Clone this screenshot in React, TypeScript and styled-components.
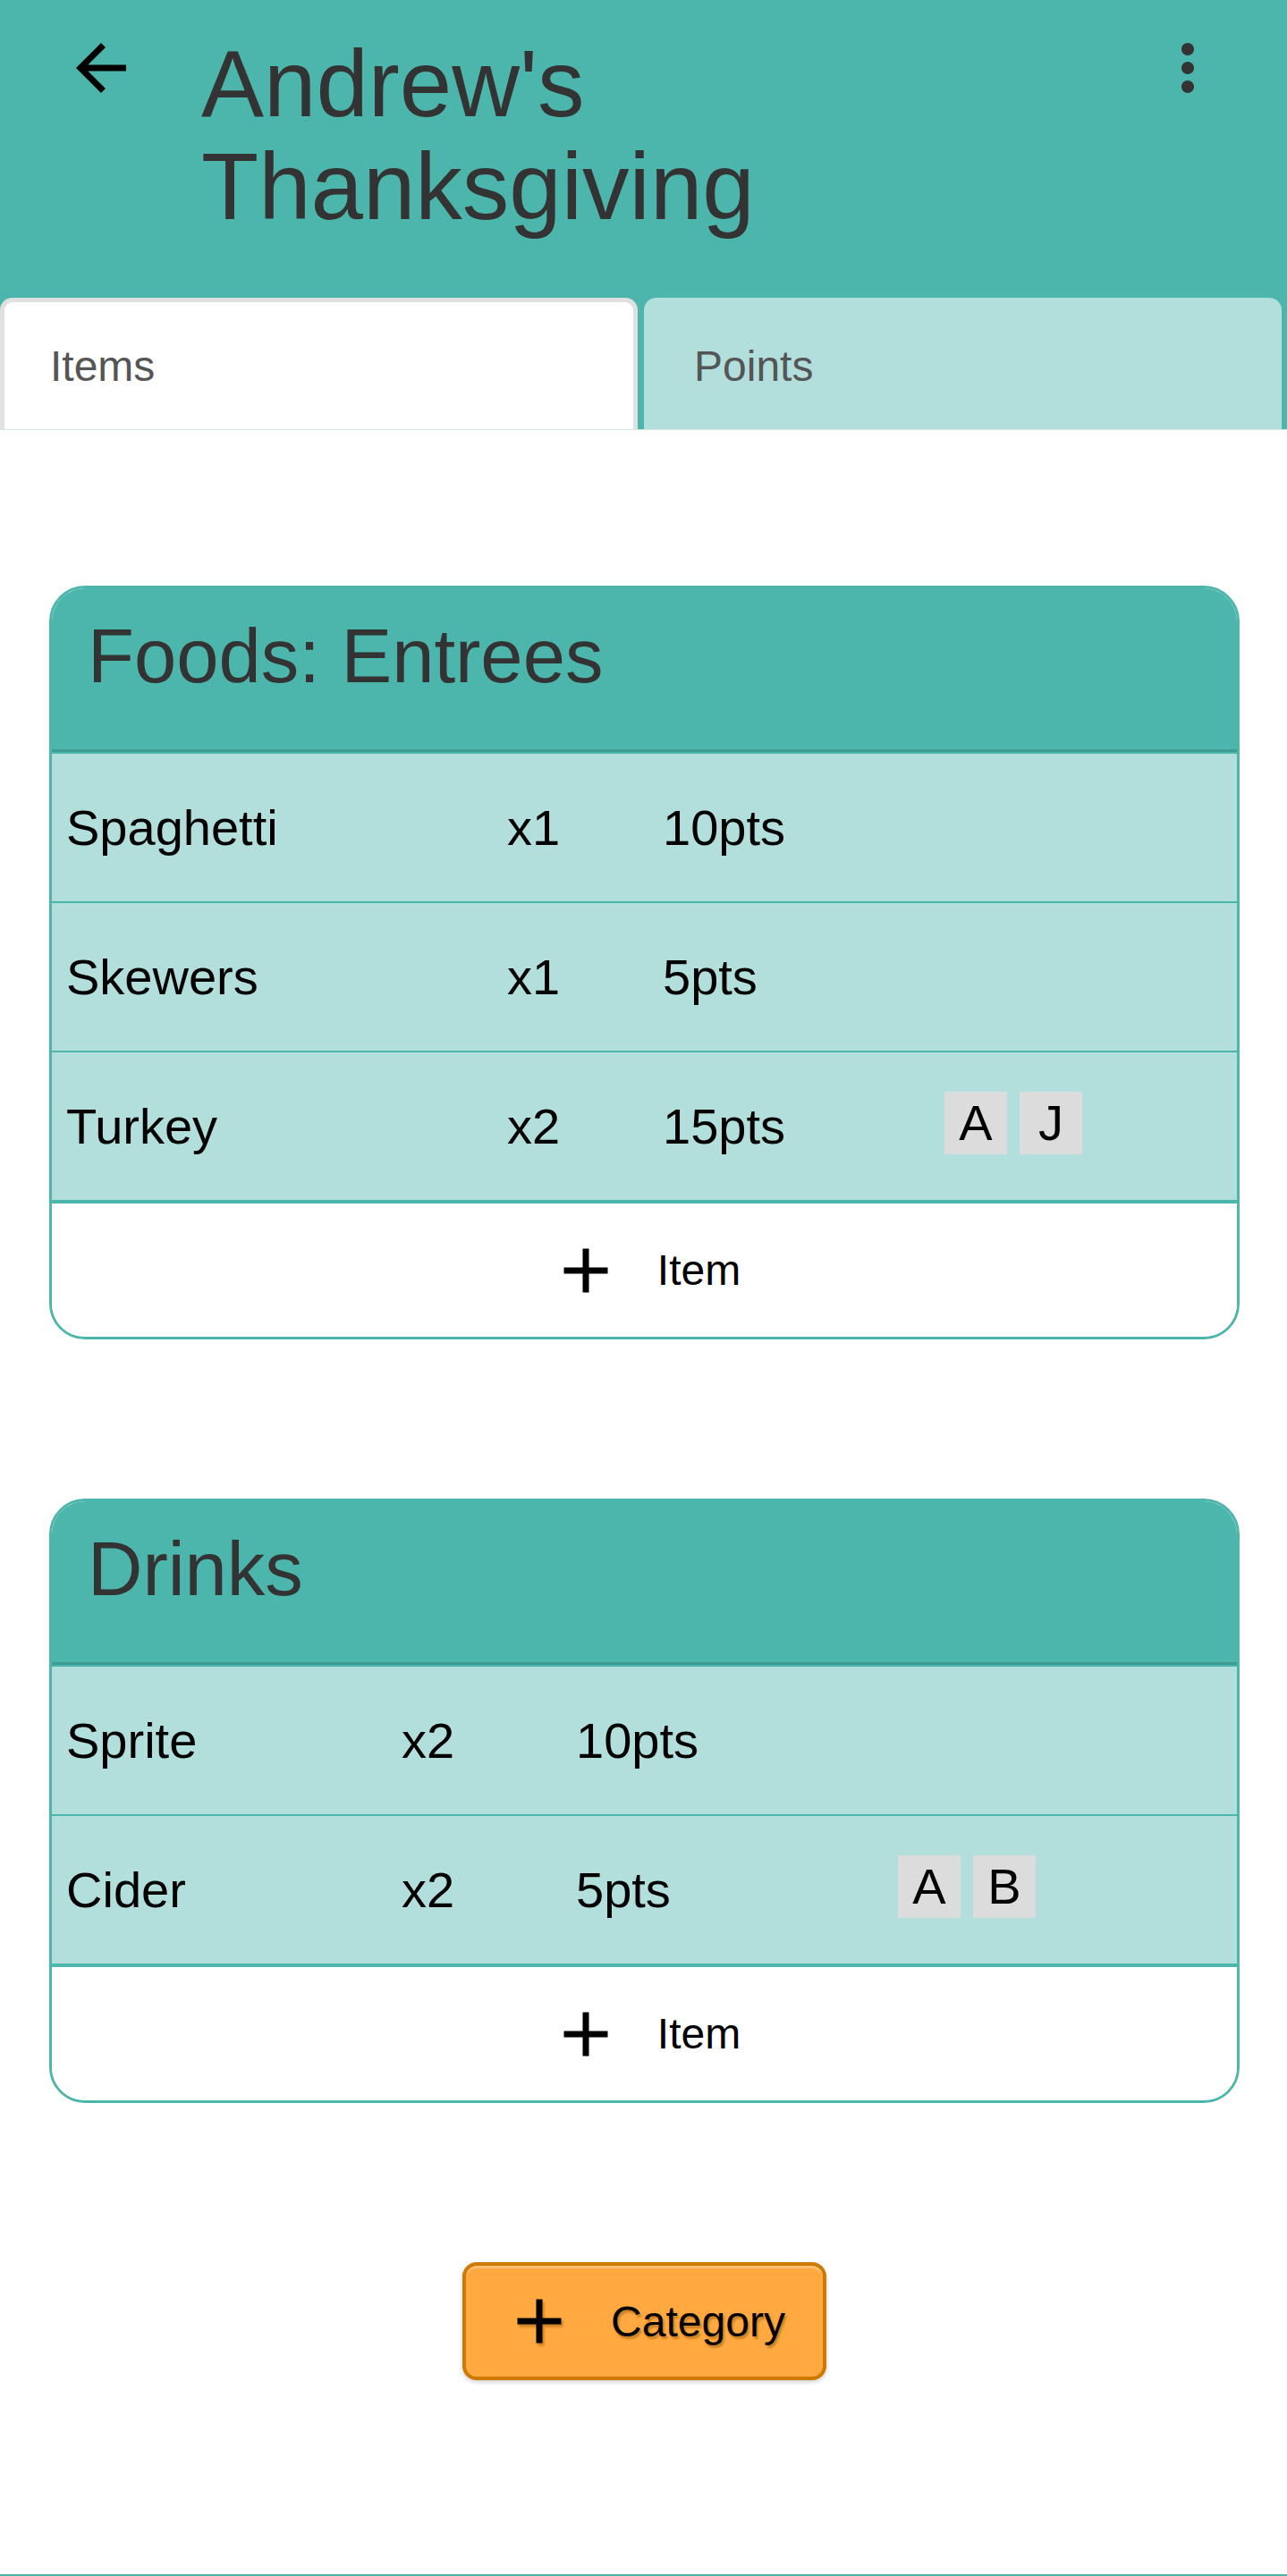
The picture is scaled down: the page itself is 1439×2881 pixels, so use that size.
import * as React from 'react';
import styled, { createGlobalStyle } from 'styled-components';
import { MdAdd, MdArrowBack, MdMoreVert } from 'react-icons/md';

const teal = '#4db6ac';
const tealLight = '#b2dfdb';
const tealDark = '#3f9c93';

const GlobalStyle = createGlobalStyle`
  body {
    margin: 0;
    background: #fff;
    font-family: "Liberation Sans", Arial, sans-serif;
  }
`;

const Page = styled.div`
  display: flex;
  flex-direction: column;
  min-height: 2881px;
`;

const TopBar = styled.header`
  display: flex;
  align-items: flex-start;
  height: 333px;
  box-sizing: border-box;
  padding: 34px 69px 0 71px;
  background: ${teal};
`;

const IconButton = styled.button<{ $color?: string; $push?: boolean }>`
  display: flex;
  flex: none;
  margin-left: ${props => (props.$push ? 'auto' : '0')};
  padding: 0;
  border: 0;
  background: none;
  color: ${props => props.$color || '#000'};
  svg {
    width: 84px;
    height: 84px;
  }
`;

const Title = styled.h1`
  max-width: 900px;
  margin: 2px 0 0 70px;
  font-size: 105px;
  font-weight: 400;
  line-height: 115px;
  color: #333;
`;

const TabBar = styled.nav`
  display: grid;
  grid-template-columns: 1fr 1fr;
  gap: 7px;
  padding-right: 6px;
  background: ${teal};
  border-bottom: 1px solid #d5e7e7;
`;

const Tab = styled.div<{ $active?: boolean }>`
  display: flex;
  align-items: center;
  min-width: 0;
  height: 147px;
  box-sizing: border-box;
  border-radius: 14px 14px 0 0;
  font-size: 48px;
  color: #555;
  background: ${props => (props.$active ? '#fff' : tealLight)};
  border: ${props => (props.$active ? '5px solid #e0e0e0' : '0')};
  border-bottom: 0;
  padding: ${props => (props.$active ? '0 0 0 51px' : '5px 0 0 56px')};
`;

const Main = styled.main`
  flex: 1;
  display: flex;
  flex-direction: column;
  padding: 174px 53px 217px 55px;
`;

const Card = styled.section`
  border: 3px solid ${teal};
  border-radius: 40px;
  overflow: hidden;
  margin-bottom: 178px;
`;

const CardHeader = styled.h2`
  margin: 0;
  padding: 27px 40px 55px;
  background: ${teal};
  border-bottom: 3px solid ${tealDark};
  font-size: 85px;
  font-weight: 400;
  line-height: normal;
  color: #333;
`;

const Rows = styled.div`
  border-top: 2px solid ${teal};
`;

const ItemRow = styled.div<{ $columns: string }>`
  display: grid;
  grid-template-columns: ${props => props.$columns};
  height: 165px;
  background: ${tealLight};
  border-bottom: 2px solid ${teal};
`;

const Cell = styled.div<{ $plain?: boolean }>`
  display: flex;
  align-items: center;
  padding-left: 16px;
  font-size: 56px;
  color: #000;
  & + & {
    border-left: 1px solid ${props => (props.$plain ? 'transparent' : 'rgba(255, 255, 255, 0.5)')};
  }
`;

const ChipCell = styled(Cell)`
  gap: 14px;
  padding-left: 20px;
`;

const Chip = styled.span`
  display: flex;
  align-items: center;
  justify-content: center;
  width: 70px;
  height: 70px;
  margin-top: -8px;
  background: #dcdcdc;
  font-size: 56px;
`;

const AddItemRow = styled.button`
  display: flex;
  align-items: center;
  justify-content: center;
  gap: 38px;
  width: 100%;
  height: 151px;
  padding: 0;
  border: 0;
  border-top: 2px solid ${teal};
  background: #fff;
  font-family: inherit;
  font-size: 48px;
  color: #000;
  svg {
    width: 84px;
    height: 84px;
  }
`;

const CategoryButton = styled.button`
  align-self: center;
  display: flex;
  align-items: center;
  gap: 38px;
  height: 132px;
  box-sizing: border-box;
  padding: 0 42px 0 40px;
  border: 4px solid #cc7a00;
  border-radius: 16px;
  background: #ffa940;
  box-shadow: inset 0 3px 0 rgba(255, 255, 255, 0.25), 0 2px 5px rgba(0, 0, 0, 0.2);
  font-family: inherit;
  font-size: 48px;
  color: #000;
  text-shadow: 2px 3px 2px rgba(140, 80, 0, 0.45);
  svg {
    width: 84px;
    height: 84px;
    filter: drop-shadow(2px 3px 1px rgba(140, 80, 0, 0.45));
  }
`;

const BottomEdge = styled.div`
  height: 2px;
  background: ${teal};
`;

type Item = { name: string; qty: number; points: number; people: string[] };

type Category = { title: string; columns: string; plainLast?: boolean; items: Item[] };

const categories: Category[] = [
  {
    title: 'Foods: Entrees',
    columns: '492px 174px 311px 1fr',
    plainLast: true,
    items: [
      { name: 'Spaghetti', qty: 1, points: 10, people: [] },
      { name: 'Skewers', qty: 1, points: 5, people: [] },
      { name: 'Turkey', qty: 2, points: 15, people: ['A', 'J'] },
    ],
  },
  {
    title: 'Drinks',
    columns: '374px 195px 356px 1fr',
    items: [
      { name: 'Sprite', qty: 2, points: 10, people: [] },
      { name: 'Cider', qty: 2, points: 5, people: ['A', 'B'] },
    ],
  },
];

function CategoryCard({ category }: { category: Category }) {
  return (
    <Card>
      <CardHeader>{category.title}</CardHeader>
      <Rows>
        {category.items.map(item => (
          <ItemRow key={item.name} $columns={category.columns}>
            <Cell>{item.name}</Cell>
            <Cell>x{item.qty}</Cell>
            <Cell>{item.points}pts</Cell>
            <ChipCell $plain={category.plainLast}>
              {item.people.map(p => (
                <Chip key={p}>{p}</Chip>
              ))}
            </ChipCell>
          </ItemRow>
        ))}
      </Rows>
      <AddItemRow>
        <MdAdd />
        Item
      </AddItemRow>
    </Card>
  );
}

export default function App() {
  return (
    <Page>
      <GlobalStyle />
      <TopBar>
        <IconButton aria-label="Back">
          <MdArrowBack />
        </IconButton>
        <Title>Andrew's Thanksgiving</Title>
        <IconButton aria-label="More" $color="#333" $push>
          <MdMoreVert />
        </IconButton>
      </TopBar>
      <TabBar>
        <Tab $active>Items</Tab>
        <Tab>Points</Tab>
      </TabBar>
      <Main>
        {categories.map(c => (
          <CategoryCard key={c.title} category={c} />
        ))}
        <CategoryButton>
          <MdAdd />
          Category
        </CategoryButton>
      </Main>
      <BottomEdge />
    </Page>
  );
}
